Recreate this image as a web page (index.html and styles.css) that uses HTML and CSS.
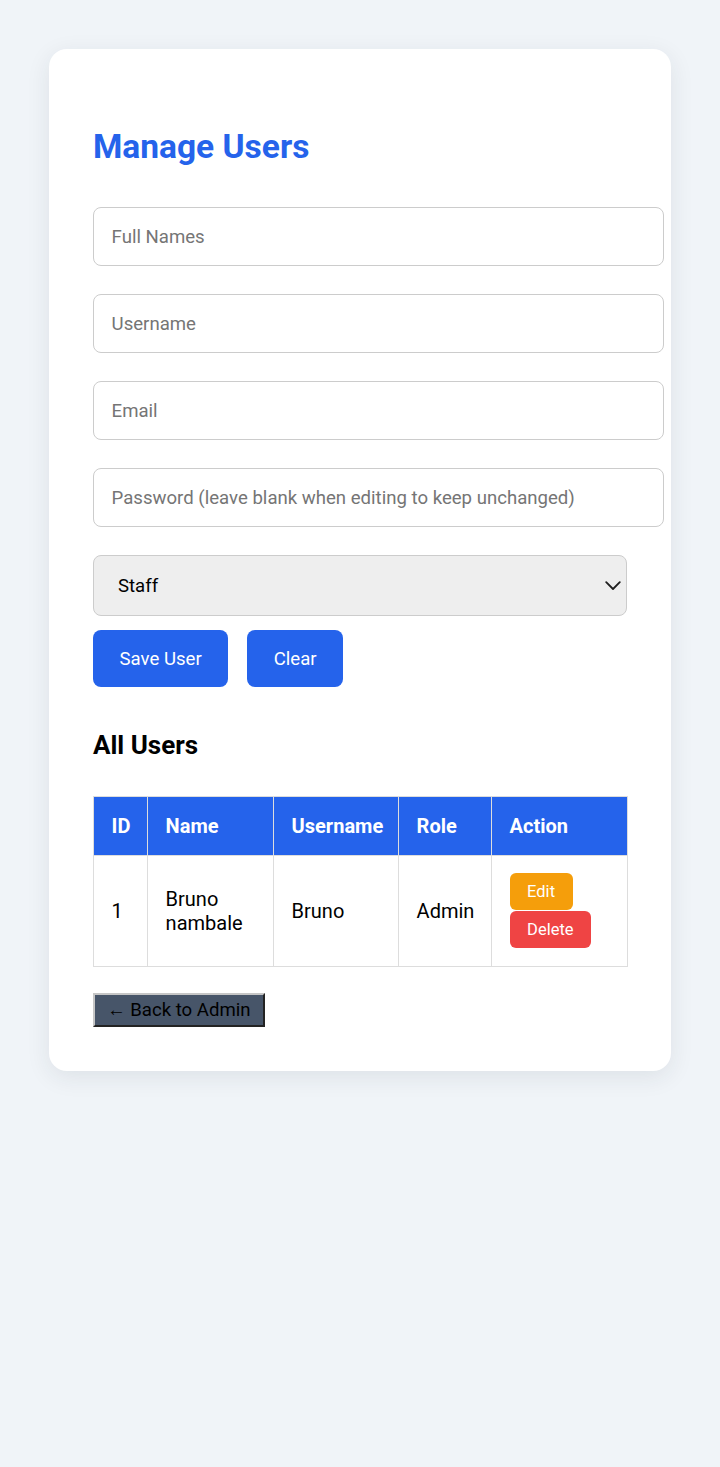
FILE: index.html
```html
<!DOCTYPE html>
<html lang="en">
<head>
<meta charset="utf-8">
<title>Manage Users</title>
<link rel="stylesheet" href="styles.css">
</head>
<body>
<div class="page">
  <div class="card">
    <h2 class="title">Manage Users</h2>
    <form class="user-form">
      <input class="field" type="text" placeholder="Full Names">
      <input class="field" type="text" placeholder="Username">
      <input class="field" type="email" placeholder="Email">
      <input class="field" type="password" placeholder="Password (leave blank when editing to keep unchanged)">
      <div class="select-wrap">
        <select class="role-select">
          <option>Staff</option>
          <option>Admin</option>
        </select>
        <svg class="select-arrow" width="16" height="10" viewBox="0 0 16 10" aria-hidden="true">
          <polyline points="1.2,1.2 8,8 14.8,1.2" fill="none" stroke="#1f1f1f" stroke-width="1.8" stroke-linecap="round" stroke-linejoin="round"/>
        </svg>
      </div>
      <div class="form-actions">
        <button type="button" class="btn-primary">Save User</button>
        <button type="button" class="btn-primary">Clear</button>
      </div>
    </form>
    <h3 class="subtitle">All Users</h3>
    <table class="users-table">
      <colgroup>
        <col class="col-id">
        <col class="col-name">
        <col class="col-user">
        <col class="col-role">
        <col class="col-action">
      </colgroup>
      <thead>
        <tr>
          <th>ID</th>
          <th>Name</th>
          <th>Username</th>
          <th>Role</th>
          <th>Action</th>
        </tr>
      </thead>
      <tbody>
        <tr>
          <td>1</td>
          <td>Bruno<br>nambale</td>
          <td>Bruno</td>
          <td>Admin</td>
          <td>
            <div class="row-actions">
              <button type="button" class="btn-edit">Edit</button>
              <button type="button" class="btn-delete">Delete</button>
            </div>
          </td>
        </tr>
      </tbody>
    </table>
    <button type="button" class="btn-back">← Back to Admin</button>
  </div>
</div>
</body>
</html>
```

FILE: styles.css
```css
* {
  font-family: Roboto, "Liberation Sans", Arial, sans-serif;
}

html, body {
  margin: 0;
  padding: 0;
  background: #f0f4f8;
}

.page {
  padding: 49px;
  min-height: 1467px;
  box-sizing: border-box;
}

.card {
  background: #ffffff;
  border-radius: 18px;
  padding: 44px;
  box-shadow: 0 6px 24px rgba(30, 41, 59, 0.09);
}

.title {
  margin: 34px 0 41px;
  font-size: 33.5px;
  font-weight: 700;
  line-height: normal;
  color: #2563eb;
}

.user-form {
  display: flex;
  flex-direction: column;
  align-items: flex-start;
}

.field {
  width: calc(100% + 37px);
  height: 59px;
  box-sizing: border-box;
  padding: 0 17.6px;
  margin: 0 0 28px;
  border: 1px solid #cccccc;
  border-radius: 8px;
  font-size: 18.6px;
  line-height: normal;
  color: #111;
  background: #fff;
  outline: none;
}

.field::placeholder {
  color: #757575;
}

.select-wrap {
  position: relative;
  width: 100%;
  margin: 0 0 14px;
}

.role-select {
  display: block;
  width: 100%;
  height: 61px;
  box-sizing: border-box;
  padding: 0 40px 0 24px;
  border: 1px solid #cccccc;
  border-radius: 8px;
  font-size: 18.6px;
  color: #000;
  background-color: #eeeeee;
  -webkit-appearance: none;
  appearance: none;
  outline: none;
}

.select-arrow {
  position: absolute;
  right: 6px;
  top: 26px;
  pointer-events: none;
}

.form-actions {
  display: flex;
  gap: 19px;
}

.btn-primary {
  height: 57px;
  box-sizing: border-box;
  background: #2563eb;
  color: #ffffff;
  border: none;
  border-radius: 8px;
  padding: 0 26.5px;
  font-size: 18.6px;
  line-height: normal;
}

.subtitle {
  margin: 43px 0 35.5px;
  font-size: 26px;
  font-weight: 700;
  line-height: normal;
  color: #000;
}

.users-table {
  width: 100%;
  table-layout: fixed;
  border-collapse: collapse;
  font-size: 20px;
}

.col-id { width: 54px; }
.col-name { width: 126px; }
.col-user { width: 125px; }
.col-role { width: 93px; }
.col-action { width: 136px; }

.users-table th,
.users-table td {
  border: 1px solid #dddddd;
  padding: 17.6px;
  text-align: left;
  line-height: normal;
}

.users-table th {
  padding-top: 17.1px;
  padding-bottom: 17.1px;
  background: #2563eb;
  color: #ffffff;
  font-weight: 700;
  white-space: nowrap;
}

.users-table td {
  color: #000;
}

.row-actions {
  display: flex;
  flex-direction: column;
  align-items: flex-start;
  gap: 1px;
}

.btn-edit,
.btn-delete {
  border: none;
  border-radius: 6px;
  padding: 9px 17.5px;
  font-size: 16.5px;
  line-height: normal;
  color: #ffffff;
}

.btn-edit {
  background: #f59e0b;
}

.btn-delete {
  background: #ef4444;
}

.btn-back {
  margin-top: 26px;
  background: #475569;
  color: #000;
  border-width: 2px;
  border-style: solid;
  border-color: #c6c6c6 #232323 #232323 #c6c6c6;
  padding: 4px 12px;
  font-size: 18.6px;
  line-height: normal;
}
```
